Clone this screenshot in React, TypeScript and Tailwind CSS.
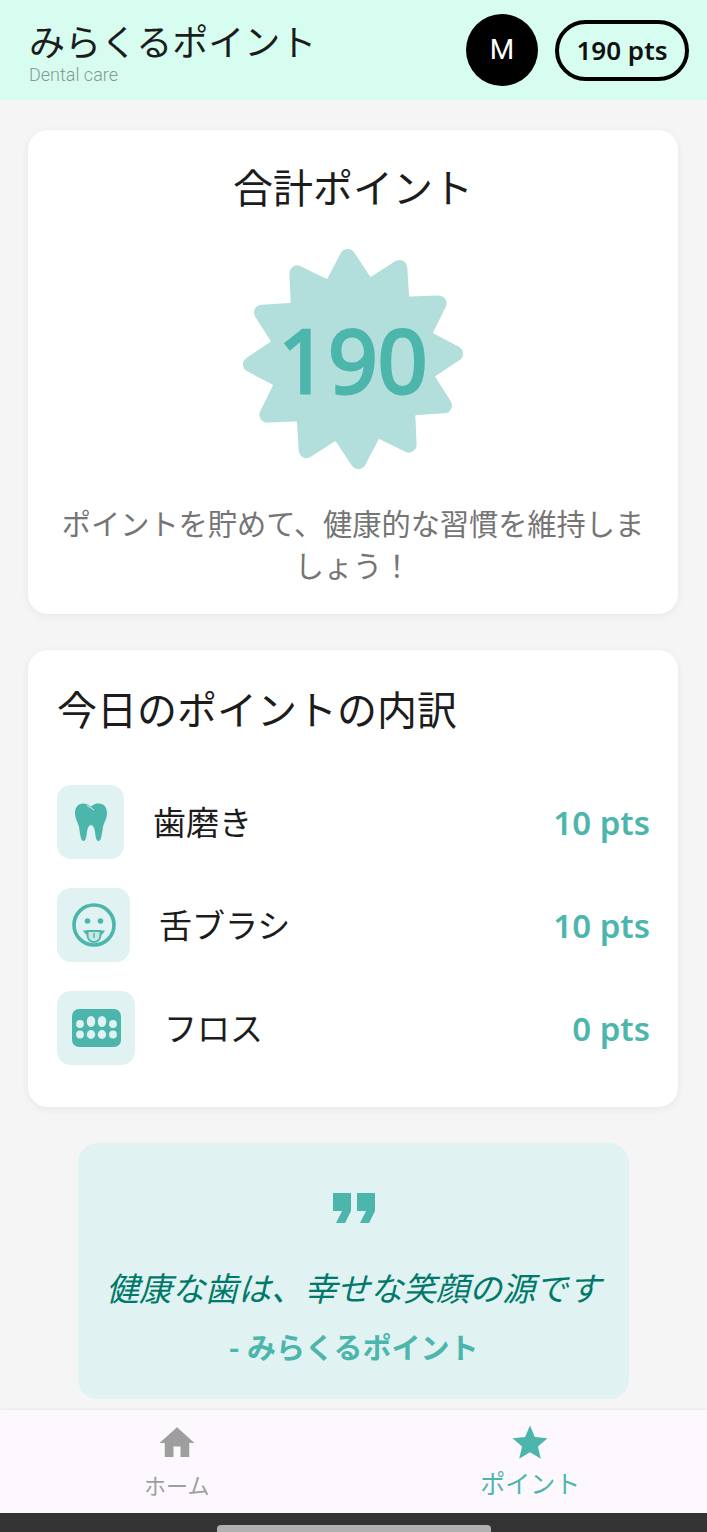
const JP = "font-['Roboto','Noto_Sans_CJK_JP',sans-serif]";

function starPath() {
  const n = 24;
  const v: [number, number][] = [];
  for (let i = 0; i < n; i++) {
    const a = ((-93 + i * 15) * Math.PI) / 180;
    const r = i % 2 === 0 ? 104 : 74;
    v.push([115 + r * Math.cos(a), 115 + r * Math.sin(a)]);
  }
  const toward = (p: [number, number], q: [number, number], d: number): [number, number] => {
    const dx = q[0] - p[0];
    const dy = q[1] - p[1];
    const l = Math.hypot(dx, dy);
    return [p[0] + (dx / l) * d, p[1] + (dy / l) * d];
  };
  let path = "";
  for (let i = 0; i < n; i++) {
    const p = v[i];
    const prev = v[(i + n - 1) % n];
    const next = v[(i + 1) % n];
    const d = i % 2 === 0 ? 2 : 9;
    const a = toward(p, prev, d);
    const b = toward(p, next, d);
    path += `${i === 0 ? "M" : "L"}${a[0].toFixed(1)} ${a[1].toFixed(1)}Q${p[0].toFixed(1)} ${p[1].toFixed(1)} ${b[0].toFixed(1)} ${b[1].toFixed(1)}`;
  }
  return path + "Z";
}

function Row({ icon, box, gap, label, pts }: { icon: React.ReactNode; box: string; gap: string; label: string; pts: string }) {
  return (
    <div className="flex items-center justify-between">
      <div className={`flex items-center ${gap}`}>
        <div className={`flex h-[74px] items-center justify-center rounded-[14px] bg-[#e0f2f1] ${box}`}>{icon}</div>
        <span className="pt-[4px] text-[33px] leading-[44px] text-[#1c1c1c]">{label}</span>
      </div>
      <span className="pt-[1px] font-['Noto_Sans',sans-serif] text-[33px] font-semibold text-[#4db6ac]">{pts}</span>
    </div>
  );
}

function Tooth() {
  return (
    <svg width="32" height="38" viewBox="0 0 32 38">
      <path
        fill="#4db6ac"
        d="M8 .5C11 .5 13 1.5 16 3.5 19 1 21 .5 24 .5 29 .5 32 4.5 32 10 32 16 29 19 28 24 27 30 26.5 38 23.5 38 21 38 20.5 33 20 29 19.5 25 18 22 16 22 14 22 12.5 25 12 29 11.5 33 11 38 8.5 38 5.5 38 5 30 4 24 3 19 0 16 0 10 0 4.5 3 .5 8 .5Z"
      />
      <path d="M12 2.5C15 4 17 5.5 19 7" stroke="#e0f2f1" strokeWidth="1" fill="none" />
    </svg>
  );
}

function Tongue() {
  return (
    <svg width="46" height="46" viewBox="0 0 46 46">
      <circle cx="23" cy="23" r="20" fill="none" stroke="#4db6ac" strokeWidth="3.6" />
      <circle cx="16.5" cy="19" r="2.8" fill="#4db6ac" />
      <circle cx="29.5" cy="19" r="2.8" fill="#4db6ac" />
      <path d="M12 28.5H34C33 31 31.5 32 30 33H16C14.5 32 13 31 12 28.5Z" fill="#4db6ac" />
      <path d="M16.5 29V33.5A6.5 6.5 0 0 0 29.5 33.5V29Z" fill="#c7e8e5" stroke="#4db6ac" strokeWidth="2" />
      <path d="M23 31V36" stroke="#4db6ac" strokeWidth="1.4" />
    </svg>
  );
}

function Teeth() {
  return (
    <svg width="49" height="38" viewBox="0 0 49 38">
      <rect width="49" height="38" rx="7" fill="#4db6ac" />
      <g fill="#e0f2f1">
        <ellipse cx="8" cy="15" rx="3.9" ry="4" />
        <ellipse cx="19" cy="12.5" rx="4.2" ry="5.6" />
        <ellipse cx="30" cy="12.5" rx="4.2" ry="5.6" />
        <ellipse cx="41" cy="15" rx="3.9" ry="4" />
        <ellipse cx="8" cy="25.5" rx="3.9" ry="4" />
        <ellipse cx="19" cy="25.5" rx="4.2" ry="4.4" />
        <ellipse cx="30" cy="25.5" rx="4.2" ry="4.4" />
        <ellipse cx="41" cy="25.5" rx="3.9" ry="4" />
      </g>
    </svg>
  );
}

export default function App() {
  return (
    <div className={`relative flex h-[1532px] w-[707px] flex-col overflow-hidden bg-[#f5f5f5] ${JP}`}>
      <header className="flex h-[100px] shrink-0 items-center justify-between bg-[#d7fdf0] pl-[29px] pr-[18px]">
        <div className="flex flex-col">
          <span className="mt-[4px] text-[36px] leading-[50px] text-[#1c1c1c]">みらくるポイント</span>
          <span className="-mt-[4px] text-[18px] leading-[20px] font-light text-[#7f9a93]">Dental care</span>
        </div>
        <div className="flex items-center gap-[17px]">
          <div className="flex h-[72px] w-[72px] items-center justify-center rounded-full bg-black text-[28px] text-white">M</div>
          <div className="flex h-[61px] w-[134px] items-center justify-center rounded-full border-[4px] border-black font-['Noto_Sans',sans-serif] text-[26px] font-semibold text-[#111]">
            190 pts
          </div>
        </div>
      </header>

      <main className="flex flex-col gap-[36px] pl-[28px] pr-[29px] pt-[30px]">
        <section className="flex h-[484px] flex-col items-center rounded-[20px] bg-white px-[30px] pt-[32px] shadow-[0_2px_8px_rgba(0,0,0,0.06)]">
          <h2 className="text-[40px] leading-[56px] font-normal text-[#1c1c1c]">合計ポイント</h2>
          <div className="relative mt-[26px] flex h-[230px] w-[230px] items-center justify-center">
            <svg className="absolute inset-0" width="230" height="230" viewBox="0 0 230 230">
              <path d={starPath()} fill="#b2dfdb" stroke="#b2dfdb" strokeWidth="14" strokeLinejoin="round" />
            </svg>
            <span className="relative font-['Noto_Sans',sans-serif] text-[87px] font-normal leading-none text-[#4db6ac] [-webkit-text-stroke:3px_#4db6ac]">190</span>
          </div>
          <p className="mt-[30px] text-center text-[29.2px] leading-[42px] text-[#757575]">
            ポイントを貯めて、健康的な習慣を維持しましょう！
          </p>
        </section>

        <section className="flex h-[457px] flex-col rounded-[20px] bg-white pl-[29px] pr-[28px] pt-[34px] shadow-[0_2px_8px_rgba(0,0,0,0.06)]">
          <h2 className="text-[40px] leading-[56px] font-normal text-[#1c1c1c]">今日のポイントの内訳</h2>
          <div className="mt-[45px] flex flex-col gap-[29px]">
            <Row icon={<Tooth />} box="w-[67px]" gap="gap-[29px]" label="歯磨き" pts="10 pts" />
            <Row icon={<Tongue />} box="w-[73px]" gap="gap-[29px]" label="舌ブラシ" pts="10 pts" />
            <Row icon={<Teeth />} box="w-[78px]" gap="gap-[29px]" label="フロス" pts="0 pts" />
          </div>
        </section>

        <section className="ml-[50px] mr-[49px] flex h-[256px] flex-col items-center rounded-[20px] bg-[#e0f2f1] pt-[29px]">
          <svg width="72" height="72" viewBox="0 0 24 24" fill="#4db6ac">
            <path d="M14 17h3l2-4V7h-6v6h3M6 17h3l2-4V7H5v6h3l-2 4z" />
          </svg>
          <p className="mt-[24px] text-[33px] leading-[44px] italic text-[#00796b]">健康な歯は、幸せな笑顔の源です</p>
          <p className="mt-[17px] text-[29px] leading-[40px] font-bold text-[#4db6ac]">- みらくるポイント</p>
        </section>
      </main>

      <nav className="absolute bottom-[19px] left-0 flex h-[103px] w-full bg-[#fdf8fe] shadow-[0_-1px_3px_rgba(0,0,0,0.06)]">
        <div className="flex flex-1 flex-col items-center pt-[12px] text-[#9e9e9e]">
          <svg width="42" height="42" viewBox="0 0 24 24" fill="currentColor">
            <path d="M10 20v-6h4v6h5v-8h3L12 3 2 12h3v8z" />
          </svg>
          <span className="mt-[7px] text-[22px] leading-[32px]">ホーム</span>
        </div>
        <div className="flex flex-1 flex-col items-center pt-[12px] text-[#4db6ac]">
          <svg width="42" height="42" viewBox="0 0 24 24" fill="currentColor">
            <path d="M12 17.27 18.18 21l-1.64-7.03L22 9.24l-7.19-.61L12 2 9.19 8.63 2 9.24l5.46 4.73L5.82 21z" />
          </svg>
          <span className="mt-[4px] text-[25px] leading-[34px]">ポイント</span>
        </div>
      </nav>

      <div className="absolute bottom-0 left-0 flex h-[19px] w-full items-end justify-center bg-[#333333]">
        <div className="h-[7px] w-[274px] rounded-t-[4px] bg-[#b0b0b0]" />
      </div>
    </div>
  );
}
